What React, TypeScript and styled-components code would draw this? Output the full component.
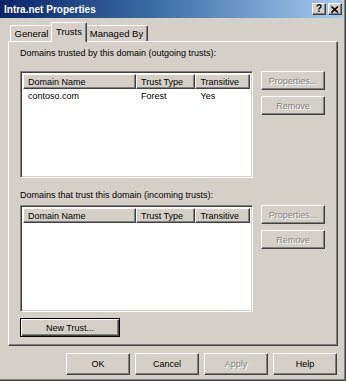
import React from 'react';
import styled, { createGlobalStyle, css } from 'styled-components';

const Global = createGlobalStyle`
  html, body { margin: 0; padding: 0; background: #d4d0c8; }
  body { font-family: "Liberation Sans", Arial, sans-serif; font-size: 9px; color: #000; }
  * { box-sizing: border-box; }
`;

const Window = styled.div`
  width: 346px;
  height: 381px;
  background: #d4d0c8;
  border-right: 1px solid #404040;
  border-bottom: 1px solid #404040;
  box-shadow: inset -1px -1px 0 #808080;
  padding: 0 2px 2px 0;
  display: flex;
  flex-direction: column;
`;

const TitleBar = styled.div`
  height: 18px;
  display: flex;
  align-items: center;
  padding: 0 1px 0 4px;
  background: linear-gradient(to right, #0a246a 0%, #3a6ea5 45%, #a6caf0 100%);
`;

const Title = styled.div`
  flex: 1;
  color: #fff;
  font-weight: bold;
  font-size: 10px;
  font-family: "Liberation Sans", Arial, sans-serif;
`;

const CaptionButton = styled.div`
  width: 14px;
  height: 12px;
  margin-left: 2px;
  background: #d4d0c8;
  border: 1px solid;
  border-color: #fff #404040 #404040 #fff;
  box-shadow: inset -1px -1px 0 #808080;
  display: flex;
  align-items: center;
  justify-content: center;
  font-weight: bold;
  font-size: 10px;
  line-height: 1;
`;

const Body = styled.div`
  flex: 1;
  display: flex;
  flex-direction: column;
  padding: 4px 5px 0 8px;
`;

const TabStrip = styled.div`
  height: 19px;
  display: flex;
  align-items: flex-end;
  padding-left: 2px;
  position: relative;
  z-index: 1;
`;

const Tab = styled.div<{ $active?: boolean; $w: number }>`
  width: ${(p) => p.$w}px;
  height: 16px;
  display: flex;
  align-items: center;
  justify-content: center;
  font-size: 9.5px;
  background: #d4d0c8;
  border-top: 1px solid #fff;
  border-left: 1px solid #fff;
  border-right: 1px solid #404040;
  box-shadow: inset -1px 0 0 #808080;
  border-radius: 2px 2px 0 0;
  ${(p) =>
    p.$active &&
    css`
      height: 20px;
      margin: 0 -2px -1px;
      padding-bottom: 2px;
      position: relative;
      z-index: 1;
    `}
`;

const Panel = styled.div`
  height: 305px;
  display: flex;
  flex-direction: column;
  border: 1px solid;
  border-color: #fff #404040 #404040 #fff;
  box-shadow: inset -1px -1px 0 #808080;
  padding: 5px 0 0 11px;
`;

const Label = styled.div<{ $gap: number; $top?: number }>`
  height: 12px;
  line-height: 12px;
  margin-top: ${(p) => p.$top ?? 0}px;
  margin-bottom: ${(p) => p.$gap}px;
`;

const ListRow = styled.div`
  display: flex;
  align-items: flex-start;
`;

const ListBox = styled.div`
  width: 233px;
  height: 107px;
  background: #fff;
  border: 1px solid;
  border-color: #808080 #fff #fff #808080;
  box-shadow: inset 1px 1px 0 #404040, inset -1px -1px 0 #d4d0c8;
  padding: 2px;
`;

const Header = styled.div`
  display: flex;
  height: 15px;
`;

const HeaderCell = styled.div<{ $w: number }>`
  width: ${(p) => p.$w}px;
  height: 15px;
  background: #d4d0c8;
  border: 1px solid;
  border-color: #fff #404040 #404040 #fff;
  box-shadow: inset -1px -1px 0 #808080;
  padding-left: 4px;
  display: flex;
  align-items: center;
`;

const Row = styled.div`
  display: flex;
  height: 13px;
  align-items: center;
`;

const Cell = styled.div<{ $w: number }>`
  width: ${(p) => p.$w}px;
  padding-left: 5px;
`;

const SideButtons = styled.div`
  margin-left: 8px;
  display: flex;
  flex-direction: column;
  gap: 6px;
`;

const Button = styled.button<{ $w?: number; $h?: number; $def?: boolean }>`
  width: ${(p) => p.$w ?? 64}px;
  height: ${(p) => p.$h ?? 19}px;
  padding: 0;
  margin: 0;
  font-family: "Liberation Sans", Arial, sans-serif;
  font-size: 9px;
  color: #000;
  background: #d4d0c8;
  border: 1px solid;
  border-color: #fff #404040 #404040 #fff;
  box-shadow: inset -1px -1px 0 #808080;
  display: flex;
  align-items: center;
  justify-content: center;
  &:disabled {
    color: #808080;
    text-shadow: 1px 1px 0 #fff;
  }
  ${(p) =>
    p.$def &&
    css`
      border: 1px solid #000;
      box-shadow: inset 1px 1px 0 #fff, inset -1px -1px 0 #404040, inset -2px -2px 0 #808080;
    `}
`;

const NewTrustRow = styled.div`
  margin-top: 6px;
`;

const Footer = styled.div`
  margin-top: 7px;
  display: flex;
  justify-content: flex-end;
  gap: 5px;
  padding-right: 1px;
`;

const cols = [114, 60, 55];

function TrustList({ rows }: { rows: string[][] }) {
  return (
    <ListRow>
      <ListBox>
        <Header>
          <HeaderCell $w={cols[0]}>Domain Name</HeaderCell>
          <HeaderCell $w={cols[1]}>Trust Type</HeaderCell>
          <HeaderCell $w={cols[2]}>Transitive</HeaderCell>
        </Header>
        {rows.map((r, i) => (
          <Row key={i}>
            {r.map((c, j) => (
              <Cell key={j} $w={cols[j]}>
                {c}
              </Cell>
            ))}
          </Row>
        ))}
      </ListBox>
      <SideButtons>
        <Button disabled>Properties...</Button>
        <Button disabled>Remove</Button>
      </SideButtons>
    </ListRow>
  );
}

export default function App() {
  return (
    <>
      <Global />
      <Window>
        <TitleBar>
          <Title>Intra.net Properties</Title>
          <CaptionButton>?</CaptionButton>
          <CaptionButton>
            <svg width="8" height="7" viewBox="0 0 8 7">
              <path d="M0.5 0.5 L7 6.5 M7 0.5 L0.5 6.5" stroke="#000" strokeWidth="1.6" />
            </svg>
          </CaptionButton>
        </TitleBar>
        <Body>
          <TabStrip>
            <Tab $w={43}>General</Tab>
            <Tab $w={36} $active>
              Trusts
            </Tab>
            <Tab $w={63}>Managed By</Tab>
          </TabStrip>
          <Panel>
            <Label $gap={12}>Domains trusted by this domain (outgoing trusts):</Label>
            <TrustList rows={[["contoso.com", "Forest", "Yes"]]} />
            <Label $gap={4} $top={11}>
              Domains that trust this domain (incoming trusts):
            </Label>
            <TrustList rows={[]} />
            <NewTrustRow>
              <Button $w={100} $def>
                New Trust...
              </Button>
            </NewTrustRow>
          </Panel>
          <Footer>
            <Button $h={22}>OK</Button>
            <Button $h={22}>Cancel</Button>
            <Button $h={22} disabled>
              Apply
            </Button>
            <Button $h={22}>Help</Button>
          </Footer>
        </Body>
      </Window>
    </>
  );
}
